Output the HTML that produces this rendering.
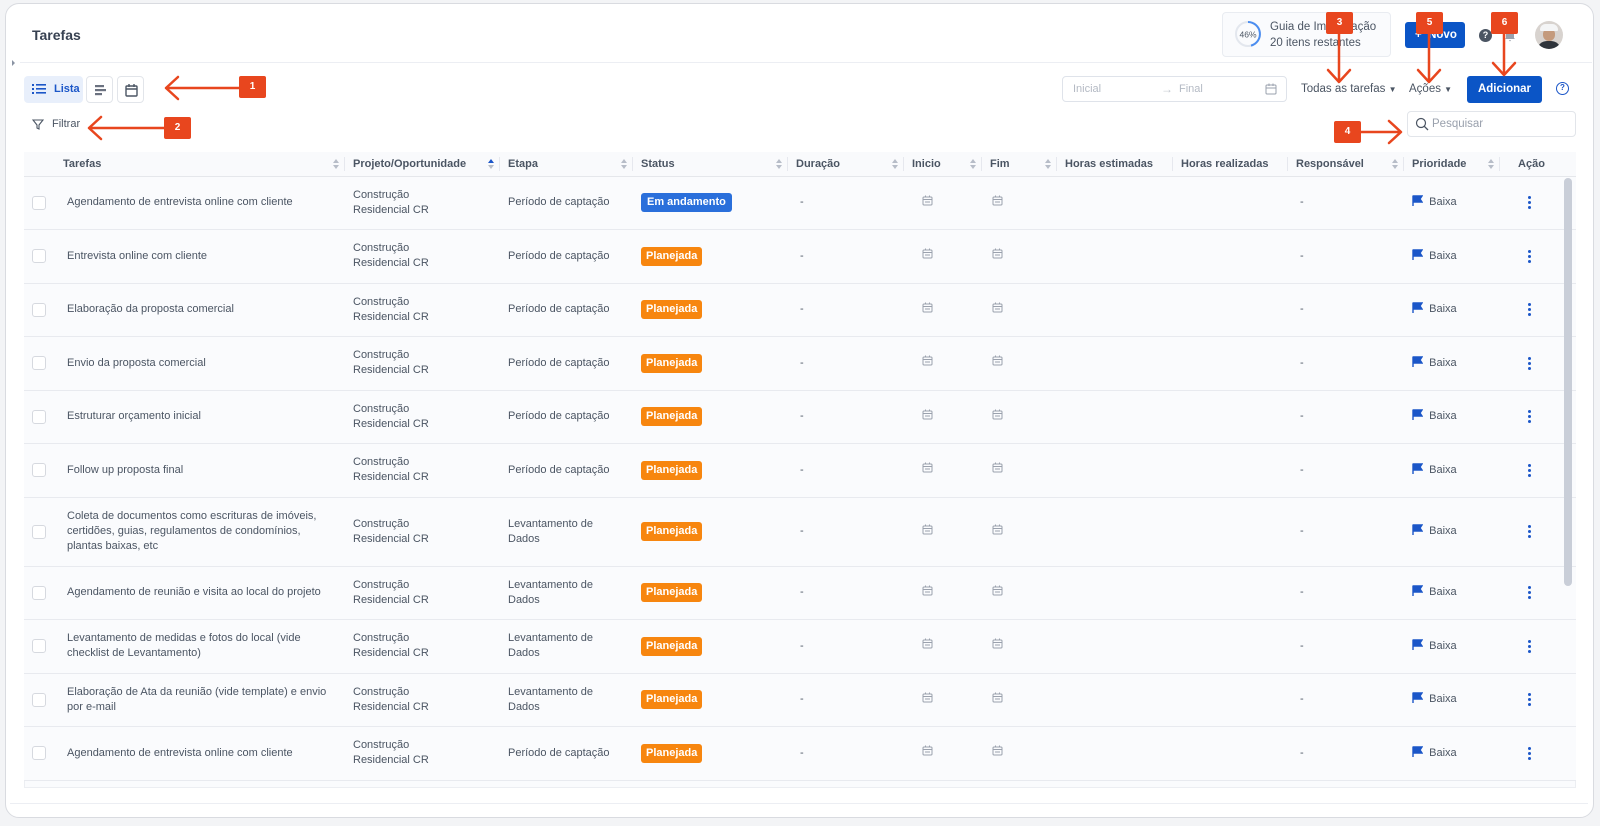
<!DOCTYPE html>
<html><head><meta charset="utf-8">
<style>
*{box-sizing:border-box;margin:0;padding:0}
body{width:1600px;height:826px;background:#f3f4f6;font-family:"Liberation Sans",sans-serif;color:#4b5563;font-size:11px;position:relative;overflow:hidden}
.card{position:absolute;left:5px;top:3px;width:1589px;height:815px;background:#fff;border:1px solid #d9dbe0;border-radius:14px}
.abs{position:absolute}
.title{left:32px;top:27px;font-size:14px;color:#374151;font-weight:bold}
.hline{left:20px;right:8px;height:1px;background:#eceef3}
.btn{border:1px solid #e2e5ea;border-radius:4px;background:#fff}
table{position:absolute;left:24px;top:152px;width:1552px;border-collapse:collapse;table-layout:fixed;background:#fafbfd}
th{height:24px;text-align:left;font-weight:bold;color:#4b5563;font-size:11px;border-bottom:1px solid #e5e7eb;background:#f9fafc;position:relative;padding-left:8px}
th .s{position:absolute;right:6px;top:7px;width:6px;height:10px}
th .sep{position:absolute;right:0;top:5px;width:1px;height:14px;background:#e6e8ee}
td{border-bottom:1px solid #e8eaef;padding-left:8px;vertical-align:middle;line-height:15px;color:#4b5563}
td.tk{padding-left:12px}
tr.r td{height:53.5px}
tr.t td{height:69px}
.cb{width:14px;height:14px;border:1px solid #d6d9df;border-radius:3px;background:#fff;margin-left:0}
.pl{display:inline-block;background:#f7860f;color:#fff;font-weight:bold;padding:2px 5px;border-radius:3px;line-height:15px}
.em{display:inline-block;background:#2a6fdb;color:#fff;font-weight:bold;padding:2px 6px;border-radius:3px;line-height:15px}
.ann{background:#e8461e;color:#fff;font-size:10px;font-weight:bold;width:27px;height:22px;border-radius:2px;text-align:center;line-height:22px;position:absolute}
.dots{width:3px;margin-left:20px}
.dots i{display:block;width:3px;height:3px;background:#1b56c8;border-radius:50%;margin:2px 0}
</style></head><body>
<div class="card"></div>
<div class="abs title">Tarefas</div>
<div class="abs hline" style="top:62px"></div>
<div class="abs" style="left:8px;top:58px;width:10px;height:10px"><svg width="10" height="10"><path d="M4 2 L7 5 L4 8Z" fill="#8a93a3"/></svg></div>

<div class="abs" style="left:1222px;top:12px;width:169px;height:45px;border:1px solid #e9ecf1;border-radius:4px;background:#fafbfd"></div>
<svg class="abs" style="left:1234px;top:20px" width="28" height="28"><circle cx="14" cy="14" r="12" fill="none" stroke="#e3e7ee" stroke-width="2"/><path d="M14 2 A12 12 0 0 1 17 25.6" fill="none" stroke="#4b8df0" stroke-width="2"/><text x="14" y="17.5" font-size="8.5" text-anchor="middle" fill="#4b5563" font-family="Liberation Sans">46%</text></svg>
<div class="abs" style="left:1270px;top:21px;font-size:11.5px;color:#4b5563">Guia de Implantação</div>
<div class="abs" style="left:1270px;top:37px;font-size:11.5px;color:#4b5563">20 itens restantes</div>
<div class="abs" style="left:1405px;top:22px;width:60px;height:26px;background:#0b55c6;border-radius:3px;color:#fff;font-weight:bold;font-size:11.5px;line-height:26px;padding-left:10px">+ &nbsp;Novo</div>
<div class="abs" style="left:1479px;top:29px;width:13px;height:13px;border-radius:50%;background:#4b5563;color:#fff;font-size:9px;font-weight:bold;text-align:center;line-height:13px">?</div>
<svg class="abs" style="left:1503px;top:28px" width="14" height="14"><path d="M3 10 L3 6 A4 4 0 0 1 11 6 L11 10 L12 11 L2 11Z M6 12 L8 12 L7 13.5Z" fill="#9aa1ad"/></svg>
<div class="abs" style="left:1535px;top:21px;width:28px;height:28px;border-radius:50%;overflow:hidden;background:#d8d3cf"><div style="position:absolute;left:8px;top:7px;width:12px;height:13px;background:#c49a7c;border-radius:6px"></div><div style="position:absolute;left:5px;top:3px;width:18px;height:7px;background:#f4f5f6;border-radius:9px 9px 2px 2px"></div><div style="position:absolute;left:2px;top:20px;width:24px;height:12px;background:#2f343b;border-radius:10px 10px 0 0"></div></div>

<div class="abs" style="left:24px;top:76px;width:59px;height:27px;background:#e8effb;border-radius:4px;color:#1b56c8;font-weight:bold;font-size:11px;line-height:27px;padding-left:30px">Lista</div>
<svg class="abs" style="left:32px;top:83px" width="14" height="12"><g fill="#1b56c8"><rect x="0" y="1" width="2" height="2"/><rect x="0" y="5" width="2" height="2"/><rect x="0" y="9" width="2" height="2"/><rect x="4" y="1" width="10" height="1.6"/><rect x="4" y="5" width="10" height="1.6"/><rect x="4" y="9" width="10" height="1.6"/></g></svg>
<div class="abs btn" style="left:86px;top:76px;width:27px;height:27px"><svg width="27" height="27"><g fill="#6b7280"><rect x="8" y="8" width="9" height="2.2"/><rect x="8" y="12" width="11" height="2.2"/><rect x="8" y="16" width="7" height="2.2"/></g></svg></div>
<div class="abs btn" style="left:117px;top:76px;width:27px;height:27px"><svg width="27" height="27"><rect x="8" y="9" width="11" height="10" rx="1" fill="none" stroke="#4b5563" stroke-width="1.4"/><path d="M8 12 H19 M11 7 V10 M16 7 V10" stroke="#4b5563" stroke-width="1.4"/></svg></div>
<svg class="abs" style="left:32px;top:118px" width="12" height="12"><path d="M1 2 H11 L7 7 V11 L5 10 V7Z" fill="none" stroke="#4b5563" stroke-width="1.1"/></svg>
<div class="abs" style="left:52px;top:118px;color:#4b5563">Filtrar</div>

<div class="abs" style="left:1062px;top:76px;width:225px;height:26px;border:1px solid #dfe3ea;border-radius:4px;background:#fff"></div>
<div class="abs" style="left:1073px;top:83px;color:#b4bac4">Inicial</div>
<div class="abs" style="left:1161px;top:82px;color:#c3c8d0;font-size:12px">→</div>
<div class="abs" style="left:1179px;top:83px;color:#b4bac4">Final</div>
<svg class="abs" style="left:1265px;top:83px" width="12" height="12"><rect x="1" y="2" width="10" height="9" rx="1" fill="none" stroke="#9aa1ad"/><path d="M1 5 H11 M4 0.5 V3 M8 0.5 V3" stroke="#9aa1ad"/></svg>
<div class="abs" style="left:1301px;top:83px;color:#4b5563;font-size:11.5px">Todas as tarefas <span style="font-size:8px">▼</span></div>
<div class="abs" style="left:1409px;top:83px;color:#4b5563;font-size:11.5px">Ações <span style="font-size:8px">▼</span></div>
<div class="abs" style="left:1467px;top:76px;width:75px;height:27px;background:#0b55c6;border-radius:3px;color:#fff;font-weight:bold;font-size:11.5px;line-height:27px;text-align:center">Adicionar</div>
<div class="abs" style="left:1556px;top:82px;width:13px;height:13px;border:1.5px solid #1b56c8;border-radius:50%;color:#1b56c8;font-size:8px;font-weight:bold;text-align:center;line-height:10px">?</div>
<div class="abs" style="left:1407px;top:111px;width:169px;height:26px;border:1px solid #e2e5ea;border-radius:4px;background:#fff"></div>
<svg class="abs" style="left:1415px;top:117px" width="14" height="14"><circle cx="6" cy="6" r="4.5" fill="none" stroke="#4b5563" stroke-width="1.2"/><path d="M9.3 9.3 L13 13" stroke="#4b5563" stroke-width="1.3"/></svg>
<div class="abs" style="left:1432px;top:118px;color:#9aa1ad;font-size:11.5px">Pesquisar</div>

<table>
<colgroup><col style="width:31px"><col style="width:290px"><col style="width:155px"><col style="width:133px"><col style="width:155px"><col style="width:116px"><col style="width:78px"><col style="width:75px"><col style="width:116px"><col style="width:115px"><col style="width:116px"><col style="width:96px"><col style="width:63px"><col style="width:13px"></colgroup>
<tr><th></th><th style="padding-left:8px">Tarefas<svg class="s"><path d="M0 4 L3 0 L6 4Z M0 6 L3 10 L6 6Z" fill="#b7bdc8"/></svg><span class="sep"></span></th>
<th>Projeto/Oportunidade<svg class="s"><path d="M0 4 L3 0 L6 4Z" fill="#1b56c8"/><path d="M0 6 L3 10 L6 6Z" fill="#b7bdc8"/></svg><span class="sep"></span></th>
<th>Etapa<svg class="s"><path d="M0 4 L3 0 L6 4Z M0 6 L3 10 L6 6Z" fill="#b7bdc8"/></svg><span class="sep"></span></th>
<th>Status<svg class="s"><path d="M0 4 L3 0 L6 4Z M0 6 L3 10 L6 6Z" fill="#b7bdc8"/></svg><span class="sep"></span></th>
<th>Duração<svg class="s"><path d="M0 4 L3 0 L6 4Z M0 6 L3 10 L6 6Z" fill="#b7bdc8"/></svg><span class="sep"></span></th>
<th>Inicio<svg class="s"><path d="M0 4 L3 0 L6 4Z M0 6 L3 10 L6 6Z" fill="#b7bdc8"/></svg><span class="sep"></span></th>
<th>Fim<svg class="s"><path d="M0 4 L3 0 L6 4Z M0 6 L3 10 L6 6Z" fill="#b7bdc8"/></svg><span class="sep"></span></th>
<th>Horas estimadas<span class="sep"></span></th><th>Horas realizadas<span class="sep"></span></th>
<th>Responsável<svg class="s"><path d="M0 4 L3 0 L6 4Z M0 6 L3 10 L6 6Z" fill="#b7bdc8"/></svg><span class="sep"></span></th>
<th>Prioridade<svg class="s"><path d="M0 4 L3 0 L6 4Z M0 6 L3 10 L6 6Z" fill="#b7bdc8"/></svg><span class="sep"></span></th>
<th style="text-align:center;padding-left:0">Ação</th><th></th></tr>
<tr class="r"><td><div class="cb"></div></td><td class="tk">Agendamento de entrevista online com cliente</td><td>Construção<br>Residencial CR</td><td>Período de captação</td><td><span class="em">Em andamento</span></td><td style="padding-left:12px">-</td><td style="padding-left:18px"><svg width="11" height="11"><rect x="1" y="2" width="9" height="8" rx="1" fill="none" stroke="#9aa1ad"/><path d="M1 4.5 H10 M3.5 0.5 V2 M7.5 0.5 V2 M3 7 H8" stroke="#9aa1ad"/></svg></td><td style="padding-left:10px"><svg width="11" height="11"><rect x="1" y="2" width="9" height="8" rx="1" fill="none" stroke="#9aa1ad"/><path d="M1 4.5 H10 M3.5 0.5 V2 M7.5 0.5 V2 M3 7 H8" stroke="#9aa1ad"/></svg></td><td></td><td></td><td style="padding-left:12px">-</td><td><svg width="11" height="11" style="vertical-align:-1px"><path d="M1 0.5 V11 M1 1 H10 L8 4 L10 7 H1" fill="#1b56c8" stroke="#1b56c8" stroke-width="1.4"/></svg>&nbsp; Baixa</td><td><div class="dots"><i></i><i></i><i></i></div></td><td></td></tr>
<tr class="r"><td><div class="cb"></div></td><td class="tk">Entrevista online com cliente</td><td>Construção<br>Residencial CR</td><td>Período de captação</td><td><span class="pl">Planejada</span></td><td style="padding-left:12px">-</td><td style="padding-left:18px"><svg width="11" height="11"><rect x="1" y="2" width="9" height="8" rx="1" fill="none" stroke="#9aa1ad"/><path d="M1 4.5 H10 M3.5 0.5 V2 M7.5 0.5 V2 M3 7 H8" stroke="#9aa1ad"/></svg></td><td style="padding-left:10px"><svg width="11" height="11"><rect x="1" y="2" width="9" height="8" rx="1" fill="none" stroke="#9aa1ad"/><path d="M1 4.5 H10 M3.5 0.5 V2 M7.5 0.5 V2 M3 7 H8" stroke="#9aa1ad"/></svg></td><td></td><td></td><td style="padding-left:12px">-</td><td><svg width="11" height="11" style="vertical-align:-1px"><path d="M1 0.5 V11 M1 1 H10 L8 4 L10 7 H1" fill="#1b56c8" stroke="#1b56c8" stroke-width="1.4"/></svg>&nbsp; Baixa</td><td><div class="dots"><i></i><i></i><i></i></div></td><td></td></tr>
<tr class="r"><td><div class="cb"></div></td><td class="tk">Elaboração da proposta comercial</td><td>Construção<br>Residencial CR</td><td>Período de captação</td><td><span class="pl">Planejada</span></td><td style="padding-left:12px">-</td><td style="padding-left:18px"><svg width="11" height="11"><rect x="1" y="2" width="9" height="8" rx="1" fill="none" stroke="#9aa1ad"/><path d="M1 4.5 H10 M3.5 0.5 V2 M7.5 0.5 V2 M3 7 H8" stroke="#9aa1ad"/></svg></td><td style="padding-left:10px"><svg width="11" height="11"><rect x="1" y="2" width="9" height="8" rx="1" fill="none" stroke="#9aa1ad"/><path d="M1 4.5 H10 M3.5 0.5 V2 M7.5 0.5 V2 M3 7 H8" stroke="#9aa1ad"/></svg></td><td></td><td></td><td style="padding-left:12px">-</td><td><svg width="11" height="11" style="vertical-align:-1px"><path d="M1 0.5 V11 M1 1 H10 L8 4 L10 7 H1" fill="#1b56c8" stroke="#1b56c8" stroke-width="1.4"/></svg>&nbsp; Baixa</td><td><div class="dots"><i></i><i></i><i></i></div></td><td></td></tr>
<tr class="r"><td><div class="cb"></div></td><td class="tk">Envio da proposta comercial</td><td>Construção<br>Residencial CR</td><td>Período de captação</td><td><span class="pl">Planejada</span></td><td style="padding-left:12px">-</td><td style="padding-left:18px"><svg width="11" height="11"><rect x="1" y="2" width="9" height="8" rx="1" fill="none" stroke="#9aa1ad"/><path d="M1 4.5 H10 M3.5 0.5 V2 M7.5 0.5 V2 M3 7 H8" stroke="#9aa1ad"/></svg></td><td style="padding-left:10px"><svg width="11" height="11"><rect x="1" y="2" width="9" height="8" rx="1" fill="none" stroke="#9aa1ad"/><path d="M1 4.5 H10 M3.5 0.5 V2 M7.5 0.5 V2 M3 7 H8" stroke="#9aa1ad"/></svg></td><td></td><td></td><td style="padding-left:12px">-</td><td><svg width="11" height="11" style="vertical-align:-1px"><path d="M1 0.5 V11 M1 1 H10 L8 4 L10 7 H1" fill="#1b56c8" stroke="#1b56c8" stroke-width="1.4"/></svg>&nbsp; Baixa</td><td><div class="dots"><i></i><i></i><i></i></div></td><td></td></tr>
<tr class="r"><td><div class="cb"></div></td><td class="tk">Estruturar orçamento inicial</td><td>Construção<br>Residencial CR</td><td>Período de captação</td><td><span class="pl">Planejada</span></td><td style="padding-left:12px">-</td><td style="padding-left:18px"><svg width="11" height="11"><rect x="1" y="2" width="9" height="8" rx="1" fill="none" stroke="#9aa1ad"/><path d="M1 4.5 H10 M3.5 0.5 V2 M7.5 0.5 V2 M3 7 H8" stroke="#9aa1ad"/></svg></td><td style="padding-left:10px"><svg width="11" height="11"><rect x="1" y="2" width="9" height="8" rx="1" fill="none" stroke="#9aa1ad"/><path d="M1 4.5 H10 M3.5 0.5 V2 M7.5 0.5 V2 M3 7 H8" stroke="#9aa1ad"/></svg></td><td></td><td></td><td style="padding-left:12px">-</td><td><svg width="11" height="11" style="vertical-align:-1px"><path d="M1 0.5 V11 M1 1 H10 L8 4 L10 7 H1" fill="#1b56c8" stroke="#1b56c8" stroke-width="1.4"/></svg>&nbsp; Baixa</td><td><div class="dots"><i></i><i></i><i></i></div></td><td></td></tr>
<tr class="r"><td><div class="cb"></div></td><td class="tk">Follow up proposta final</td><td>Construção<br>Residencial CR</td><td>Período de captação</td><td><span class="pl">Planejada</span></td><td style="padding-left:12px">-</td><td style="padding-left:18px"><svg width="11" height="11"><rect x="1" y="2" width="9" height="8" rx="1" fill="none" stroke="#9aa1ad"/><path d="M1 4.5 H10 M3.5 0.5 V2 M7.5 0.5 V2 M3 7 H8" stroke="#9aa1ad"/></svg></td><td style="padding-left:10px"><svg width="11" height="11"><rect x="1" y="2" width="9" height="8" rx="1" fill="none" stroke="#9aa1ad"/><path d="M1 4.5 H10 M3.5 0.5 V2 M7.5 0.5 V2 M3 7 H8" stroke="#9aa1ad"/></svg></td><td></td><td></td><td style="padding-left:12px">-</td><td><svg width="11" height="11" style="vertical-align:-1px"><path d="M1 0.5 V11 M1 1 H10 L8 4 L10 7 H1" fill="#1b56c8" stroke="#1b56c8" stroke-width="1.4"/></svg>&nbsp; Baixa</td><td><div class="dots"><i></i><i></i><i></i></div></td><td></td></tr>
<tr class="t"><td><div class="cb"></div></td><td class="tk">Coleta de documentos como escrituras de imóveis,<br>certidões, guias, regulamentos de condomínios,<br>plantas baixas, etc</td><td>Construção<br>Residencial CR</td><td>Levantamento de<br>Dados</td><td><span class="pl">Planejada</span></td><td style="padding-left:12px">-</td><td style="padding-left:18px"><svg width="11" height="11"><rect x="1" y="2" width="9" height="8" rx="1" fill="none" stroke="#9aa1ad"/><path d="M1 4.5 H10 M3.5 0.5 V2 M7.5 0.5 V2 M3 7 H8" stroke="#9aa1ad"/></svg></td><td style="padding-left:10px"><svg width="11" height="11"><rect x="1" y="2" width="9" height="8" rx="1" fill="none" stroke="#9aa1ad"/><path d="M1 4.5 H10 M3.5 0.5 V2 M7.5 0.5 V2 M3 7 H8" stroke="#9aa1ad"/></svg></td><td></td><td></td><td style="padding-left:12px">-</td><td><svg width="11" height="11" style="vertical-align:-1px"><path d="M1 0.5 V11 M1 1 H10 L8 4 L10 7 H1" fill="#1b56c8" stroke="#1b56c8" stroke-width="1.4"/></svg>&nbsp; Baixa</td><td><div class="dots"><i></i><i></i><i></i></div></td><td></td></tr>
<tr class="r"><td><div class="cb"></div></td><td class="tk">Agendamento de reunião e visita ao local do projeto</td><td>Construção<br>Residencial CR</td><td>Levantamento de<br>Dados</td><td><span class="pl">Planejada</span></td><td style="padding-left:12px">-</td><td style="padding-left:18px"><svg width="11" height="11"><rect x="1" y="2" width="9" height="8" rx="1" fill="none" stroke="#9aa1ad"/><path d="M1 4.5 H10 M3.5 0.5 V2 M7.5 0.5 V2 M3 7 H8" stroke="#9aa1ad"/></svg></td><td style="padding-left:10px"><svg width="11" height="11"><rect x="1" y="2" width="9" height="8" rx="1" fill="none" stroke="#9aa1ad"/><path d="M1 4.5 H10 M3.5 0.5 V2 M7.5 0.5 V2 M3 7 H8" stroke="#9aa1ad"/></svg></td><td></td><td></td><td style="padding-left:12px">-</td><td><svg width="11" height="11" style="vertical-align:-1px"><path d="M1 0.5 V11 M1 1 H10 L8 4 L10 7 H1" fill="#1b56c8" stroke="#1b56c8" stroke-width="1.4"/></svg>&nbsp; Baixa</td><td><div class="dots"><i></i><i></i><i></i></div></td><td></td></tr>
<tr class="r"><td><div class="cb"></div></td><td class="tk">Levantamento de medidas e fotos do local (vide<br>checklist de Levantamento)</td><td>Construção<br>Residencial CR</td><td>Levantamento de<br>Dados</td><td><span class="pl">Planejada</span></td><td style="padding-left:12px">-</td><td style="padding-left:18px"><svg width="11" height="11"><rect x="1" y="2" width="9" height="8" rx="1" fill="none" stroke="#9aa1ad"/><path d="M1 4.5 H10 M3.5 0.5 V2 M7.5 0.5 V2 M3 7 H8" stroke="#9aa1ad"/></svg></td><td style="padding-left:10px"><svg width="11" height="11"><rect x="1" y="2" width="9" height="8" rx="1" fill="none" stroke="#9aa1ad"/><path d="M1 4.5 H10 M3.5 0.5 V2 M7.5 0.5 V2 M3 7 H8" stroke="#9aa1ad"/></svg></td><td></td><td></td><td style="padding-left:12px">-</td><td><svg width="11" height="11" style="vertical-align:-1px"><path d="M1 0.5 V11 M1 1 H10 L8 4 L10 7 H1" fill="#1b56c8" stroke="#1b56c8" stroke-width="1.4"/></svg>&nbsp; Baixa</td><td><div class="dots"><i></i><i></i><i></i></div></td><td></td></tr>
<tr class="r"><td><div class="cb"></div></td><td class="tk">Elaboração de Ata da reunião (vide template) e envio<br>por e-mail</td><td>Construção<br>Residencial CR</td><td>Levantamento de<br>Dados</td><td><span class="pl">Planejada</span></td><td style="padding-left:12px">-</td><td style="padding-left:18px"><svg width="11" height="11"><rect x="1" y="2" width="9" height="8" rx="1" fill="none" stroke="#9aa1ad"/><path d="M1 4.5 H10 M3.5 0.5 V2 M7.5 0.5 V2 M3 7 H8" stroke="#9aa1ad"/></svg></td><td style="padding-left:10px"><svg width="11" height="11"><rect x="1" y="2" width="9" height="8" rx="1" fill="none" stroke="#9aa1ad"/><path d="M1 4.5 H10 M3.5 0.5 V2 M7.5 0.5 V2 M3 7 H8" stroke="#9aa1ad"/></svg></td><td></td><td></td><td style="padding-left:12px">-</td><td><svg width="11" height="11" style="vertical-align:-1px"><path d="M1 0.5 V11 M1 1 H10 L8 4 L10 7 H1" fill="#1b56c8" stroke="#1b56c8" stroke-width="1.4"/></svg>&nbsp; Baixa</td><td><div class="dots"><i></i><i></i><i></i></div></td><td></td></tr>
<tr class="r"><td><div class="cb"></div></td><td class="tk">Agendamento de entrevista online com cliente</td><td>Construção<br>Residencial CR</td><td>Período de captação</td><td><span class="pl">Planejada</span></td><td style="padding-left:12px">-</td><td style="padding-left:18px"><svg width="11" height="11"><rect x="1" y="2" width="9" height="8" rx="1" fill="none" stroke="#9aa1ad"/><path d="M1 4.5 H10 M3.5 0.5 V2 M7.5 0.5 V2 M3 7 H8" stroke="#9aa1ad"/></svg></td><td style="padding-left:10px"><svg width="11" height="11"><rect x="1" y="2" width="9" height="8" rx="1" fill="none" stroke="#9aa1ad"/><path d="M1 4.5 H10 M3.5 0.5 V2 M7.5 0.5 V2 M3 7 H8" stroke="#9aa1ad"/></svg></td><td></td><td></td><td style="padding-left:12px">-</td><td><svg width="11" height="11" style="vertical-align:-1px"><path d="M1 0.5 V11 M1 1 H10 L8 4 L10 7 H1" fill="#1b56c8" stroke="#1b56c8" stroke-width="1.4"/></svg>&nbsp; Baixa</td><td><div class="dots"><i></i><i></i><i></i></div></td><td></td></tr>
</table>
<div class="abs" style="left:24px;top:781px;width:1552px;height:7px;background:#fafbfd;border:1px solid #eceef2;border-top:none"></div>
<div class="abs" style="left:1564px;top:178px;width:8px;height:408px;background:#c9ced8;border-radius:4px"></div>
<div class="abs hline" style="top:803px;left:10px;right:12px"></div>

<svg class="abs" style="left:0;top:0" width="1600" height="826">
<g stroke="#e8461e" stroke-width="2.5" fill="none" stroke-linecap="round" stroke-linejoin="round">
<path d="M239 88 H166 M178 77 L166 88 L178 99"/>
<path d="M164 128 H89 M101 117 L89 128 L101 139"/>
<path d="M1339 34 V81 M1328 70 L1339 82 L1350 70"/>
<path d="M1429 34 V81 M1418 70 L1429 82 L1440 70"/>
<path d="M1504 34 V74 M1493 63 L1504 75 L1515 63"/>
<path d="M1360 132 H1400 M1389 121 L1401 132 L1389 143"/>
</g></svg>
<div class="ann" style="left:239px;top:76px">1</div>
<div class="ann" style="left:164px;top:117px">2</div>
<div class="ann" style="left:1326px;top:12px">3</div>
<div class="ann" style="left:1334px;top:121px">4</div>
<div class="ann" style="left:1416px;top:12px">5</div>
<div class="ann" style="left:1491px;top:12px">6</div>
</body></html>
